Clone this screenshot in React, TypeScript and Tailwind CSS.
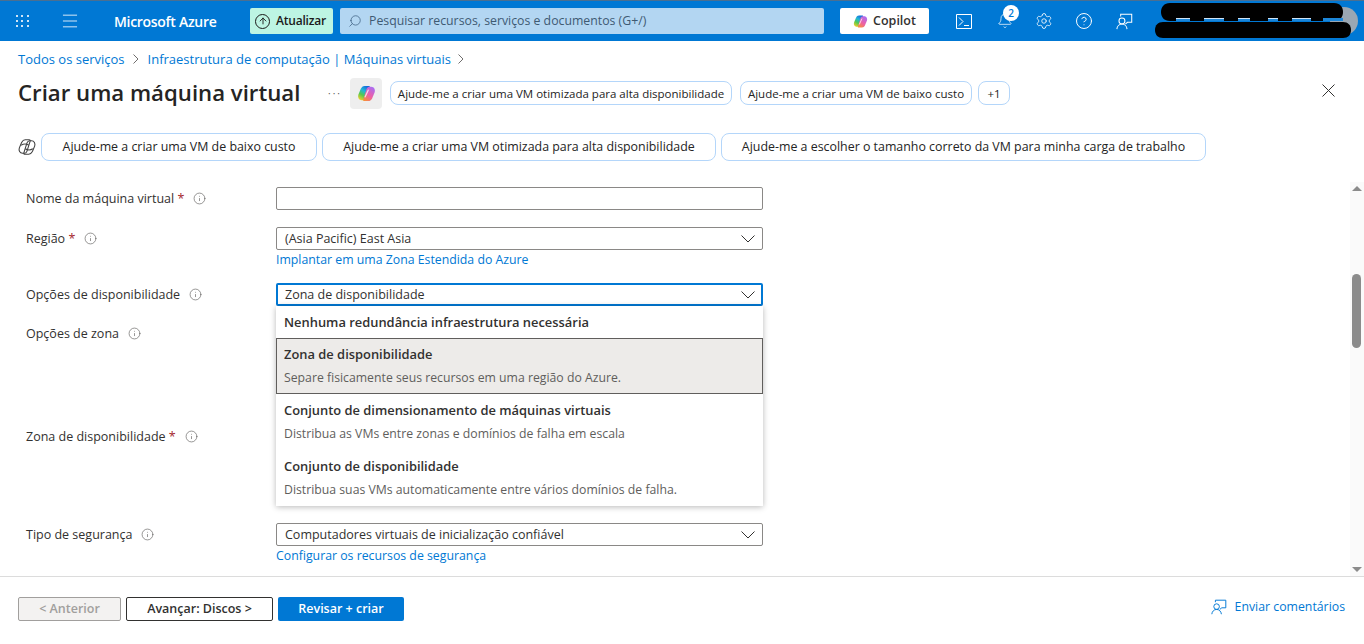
import { useId } from "react";
import { Menu, Search, Bell, Settings, CircleHelp, ArrowUp, Info } from "lucide-react";

const font = { fontFamily: '"Open Sans", "Noto Sans", sans-serif' };

const leftLobe = "M12.5 2H8C6 2 5 3.200 4 5L1.500 11C.5 14 2 17 5 17H7C8.500 17 9.500 16 10 14.500L13.500 3.500C13.700 2.600 13.300 2 12.500 2Z";
const rightLobe = "M7.500 18H12C14 18 15 16.800 16 15L18.500 9C19.500 6 18 3 15 3H13C11.500 3 10.500 4 10 5.500L6.500 16.500C6.300 17.400 6.700 18 7.500 18Z";

const CopilotLogo = ({ size = 20 }: { size?: number }) => {
  const id = useId();
  return (
    <svg width={size} height={size} viewBox="0 0 20 20">
      <defs>
        <linearGradient id={id + "a"} x1="0.7" y1="0" x2="0.2" y2="1">
          <stop offset="0" stopColor="#1668dc" />
          <stop offset="0.35" stopColor="#20b6d8" />
          <stop offset="0.65" stopColor="#55c94f" />
          <stop offset="1" stopColor="#f4cf2a" />
        </linearGradient>
        <linearGradient id={id + "b"} x1="0.8" y1="0" x2="0.2" y2="1">
          <stop offset="0" stopColor="#a86ef5" />
          <stop offset="0.55" stopColor="#ec5fa8" />
          <stop offset="1" stopColor="#f78f3c" />
        </linearGradient>
      </defs>
      <path d={leftLobe} fill={`url(#${id}a)`} />
      <path d={rightLobe} fill={`url(#${id}b)`} />
      <path d="M11.800 6.500 8.600 13.500" stroke="white" strokeOpacity="0.75" strokeWidth="1.300" strokeLinecap="round" />
    </svg>
  );
};

const CopilotMono = () => (
  <svg width="18" height="18" viewBox="0 0 20 20" fill="none" stroke="#424242" strokeWidth="1.200">
    <path d={leftLobe} />
    <path d={rightLobe} />
    <path d="M3.500 8c2.500-1.500 6-1.500 8.500 0M8 12c2.500 1.500 6 1.500 8.500 0" />
  </svg>
);

const FeedbackIcon = ({ color, size = 20 }: { color: string; size?: number }) => (
  <svg width={size} height={size} viewBox="0 0 20 20" fill="none" stroke={color} strokeWidth="1.200">
    <circle cx="7" cy="9.500" r="3.500" />
    <path d="M1 19c.3-3.400 2.800-6 6-6s5.700 2.600 6 6" />
    <path d="M5.500 4V1.500h13v9.500h-5l-2.500 2" />
  </svg>
);

const Chevron = () => (
  <svg width="14" height="8" viewBox="0 0 14 8" fill="none" stroke="#323130" strokeWidth="1">
    <path d="M.5.5 7 7 13.500.5" />
  </svg>
);

const Crumb = () => (
  <svg width="6" height="10" viewBox="0 0 6 10" fill="none" stroke="#605e5c" strokeWidth="0.900">
    <path d="M.5.5 5 5 .5 9.500" />
  </svg>
);

const Req = () => <span className="text-[#a4262c]">*</span>;

const Label = ({ text, req }: { text: string; req?: boolean }) => (
  <div className="flex items-center gap-[9px] text-[12.5px] leading-[23px] text-[#323130]">
    <span>
      {text} {req && <Req />}
    </span>
    <Info size={13} strokeWidth={1.2} className="text-[#605e5c]" />
  </div>
);

const SelectBox = ({ value, focus }: { value: string; focus?: boolean }) => (
  <div
    className={`flex h-[23px] w-[487px] items-center justify-between rounded-[2px] text-[12.5px] text-[#323130] ${
      focus ? "border-2 border-[#0078d4] pl-[7px] pr-[6px]" : "border border-[#8a8886] pl-2 pr-[7px]"
    }`}
  >
    <span className="pt-px">{value}</span>
    <Chevron />
  </div>
);

const Option = ({ title, desc, active }: { title: string; desc?: string; active?: boolean }) => (
  <div
    className={`flex flex-col justify-center ${desc ? "h-[56px] gap-[8px]" : "h-[32px]"} ${
      active ? "border border-[#605e5c] bg-[#edebe9] px-[7px]" : "px-2"
    }`}
  >
    <div className="text-[12.9px] font-semibold leading-4 text-[#323130]">{title}</div>
    {desc && <div className="text-[12.25px] leading-4 text-[#605e5c]">{desc}</div>}
  </div>
);

const Chip = ({ text, w }: { text: string; w: string }) => (
  <div className={`flex h-[24px] items-center justify-center whitespace-nowrap rounded-[8px] border border-[#b4d6fa] pt-px text-[11.5px] text-[#242424] ${w}`}>
    {text}
  </div>
);

const BigChip = ({ text, w }: { text: string; w: string }) => (
  <div className={`flex h-[28px] items-center justify-center whitespace-nowrap rounded-[8px] border border-[#b4d6fa] pt-px text-[12.4px] text-[#242424] ${w}`}>
    {text}
  </div>
);

const Link = ({ text }: { text: string }) => (
  <div className="text-[12.3px] leading-[19px] text-[#0078d4]">{text}</div>
);

export default function App() {
  return (
    <div style={font} className="relative flex h-[644px] w-[1364px] flex-col overflow-hidden bg-white">
      {/* top bar */}
      <header className="relative flex h-[41px] shrink-0 items-center border-t border-[#4a6f91] bg-[#0078d4] text-white">
        <div className="ml-[16px] grid w-[13px] grid-cols-3 gap-[3px]">
          {Array.from({ length: 9 }).map((_, i) => (
            <span key={i} className="h-[2px] w-[2px] bg-[#cfe4f7]" />
          ))}
        </div>
        <Menu size={20} strokeWidth={1.2} className="ml-[31px] text-[#d5e8f8]" />
        <div className="ml-[34px] w-[136px] text-[14px] font-semibold tracking-[-0.3px] whitespace-nowrap">Microsoft Azure</div>
        <div className="flex h-[26px] w-[83px] items-center rounded-[2px] bg-[#bdf5e3] pl-[5px] text-[12px] font-semibold tracking-[-0.2px] text-[#1b1a19]">
          <span className="flex h-[15px] w-[15px] items-center justify-center rounded-full border border-[#1b1a19]">
            <ArrowUp size={10} strokeWidth={2.2} />
          </span>
          <span className="ml-[6px]">Atualizar</span>
        </div>
        <div className="ml-[7px] flex h-[26px] w-[484px] items-center rounded-[2px] bg-[#b3d6f2] pl-[8px] text-[12.3px] text-[#3f5a72]">
          <Search size={14} strokeWidth={1.2} className="-scale-x-100 text-[#35587a]" />
          <span className="ml-[7px]">Pesquisar recursos, serviços e documentos (G+/)</span>
        </div>
        <div className="ml-[16px] flex h-[26px] w-[89px] items-center justify-center gap-[5px] rounded-[2px] bg-white text-[12.5px] font-semibold text-[#323130]">
          <CopilotLogo size={15} />
          Copilot
        </div>
        <svg className="ml-[27px]" width="16" height="15" viewBox="0 0 16 15" fill="none" stroke="white" strokeWidth="1">
          <path d="M.5.5h15v14H.5z" />
          <path d="M3 3.500 7 7.500 3 11.500M8 11.500h5" />
        </svg>
        <div className="relative ml-[25px] flex">
          <Bell size={16} strokeWidth={1.1} />
          <span className="absolute -top-[8px] left-[6px] flex h-[16px] w-[16px] items-center justify-center rounded-full bg-white text-[10px] font-semibold text-[#0078d4]">
            2
          </span>
        </div>
        <Settings size={18} strokeWidth={1.1} className="ml-[22px]" />
        <CircleHelp size={18} strokeWidth={1.3} className="ml-[22px]" />
        <span className="ml-[23px] flex"><FeedbackIcon color="white" size={17} /></span>
        <div className="absolute right-[6px] top-[6px] h-[28px] w-[28px] rounded-full bg-[#9aa7b3]" />
        <svg className="absolute left-[1155px] top-[2px]" width="197" height="36" viewBox="0 0 197 36">
          <path d="M15 0h164c6 0 9 4 9 9s-3 9-9 9H15C9 18 6 14 6 9s3-9 9-9Z" fill="black" />
          <path d="M21 16.500h14M49 16.500h20M83 16.500h12M113 16.500h10M137 16.500h19M168 16.500h20" stroke="#1c86d8" strokeWidth="3" />
          <path d="M21 15.500h14M49 15.500h20M83 15.500h12M113 15.500h10M137 15.500h19" stroke="#cfe4f7" strokeWidth="1" />
          <path d="M8 19h180c5 0 8 3 8 8s-3 8-8 8H8c-5 0-8-3-8-8s3-8 8-8Z" fill="black" />
        </svg>
      </header>

      {/* page head */}
      <div className="shrink-0 px-[18px]">
        <nav className="mt-[9px] flex h-[18px] items-center text-[13px] leading-[18px] text-[#0078d4]">
          <span>Todos os serviços</span>
          <span className="ml-[8px] mr-[9px] flex"><Crumb /></span>
          <span>Infraestrutura de computação | Máquinas virtuais</span>
          <span className="ml-[7px] flex"><Crumb /></span>
        </nav>
        <div className="relative mt-[9px] flex h-[32px] items-center">
          <h1 className="w-[310px] text-[22.2px] font-semibold leading-8 whitespace-nowrap text-[#252423]">Criar uma máquina virtual</h1>
          <span className="mr-[8px] w-[14px] text-center text-[10px] leading-none tracking-[2px] text-[#605e5c]">···</span>
          <div className="flex h-[31px] w-[32px] items-center justify-center rounded-[4px] bg-[#eeeeee]">
            <CopilotLogo size={19} />
          </div>
          <div className="ml-[8px] flex gap-[8px]">
            <Chip text="Ajude-me a criar uma VM otimizada para alta disponibilidade" w="w-[342px]" />
            <Chip text="Ajude-me a criar uma VM de baixo custo" w="w-[232px]" />
          </div>
          <div className="ml-[6px]"><Chip text="+1" w="w-[32px]" /></div>
          <svg className="absolute left-[1304px] top-[7px]" width="13" height="13" viewBox="0 0 13 13" fill="none" stroke="#323130" strokeWidth="1">
            <path d="M.5.5l12 12M12.500.5l-12 12" />
          </svg>
        </div>
        <div className="mt-[24px] flex items-center">
          <span className="mr-[5px] flex w-[18px]"><CopilotMono /></span>
          <div className="flex gap-[5px]">
            <BigChip text="Ajude-me a criar uma VM de baixo custo" w="w-[276px]" />
            <BigChip text="Ajude-me a criar uma VM otimizada para alta disponibilidade" w="w-[394px]" />
            <BigChip text="Ajude-me a escolher o tamanho correto da VM para minha carga de trabalho" w="w-[485px]" />
          </div>
        </div>
      </div>

      {/* form */}
      <div className="relative mt-[21px] flex min-h-0 flex-1 overflow-hidden border-b border-[#dcdcdc]">
        <div className="flex-1 pl-[26px] pt-[5px]">
          <div className="grid grid-cols-[250px_487px] items-start">
            <Label text="Nome da máquina virtual" req />
            <div className="flex h-[23px] w-[487px] rounded-[2px] border border-[#8a8886]" />

            <div className="mt-[17px]"><Label text="Região" req /></div>
            <div className="mt-[17px]">
              <SelectBox value="(Asia Pacific) East Asia" />
              <Link text="Implantar em uma Zona Estendida do Azure" />
            </div>

            <div className="mt-[14px]"><Label text="Opções de disponibilidade" /></div>
            <div className="relative z-10 mt-[14px]">
              <SelectBox value="Zona de disponibilidade" focus />
              <div className="absolute left-0 top-[23px] w-[487px] bg-white shadow-[0_1px_6px_rgba(0,0,0,0.28)]">
                <Option title="Nenhuma redundância infraestrutura necessária" />
                <Option title="Zona de disponibilidade" desc="Separe fisicamente seus recursos em uma região do Azure." active />
                <Option title="Conjunto de dimensionamento de máquinas virtuais" desc="Distribua as VMs entre zonas e domínios de falha em escala" />
                <Option title="Conjunto de disponibilidade" desc="Distribua suas VMs automaticamente entre vários domínios de falha." />
              </div>
            </div>

            <div className="mt-[16px] h-[95px]"><Label text="Opções de zona" /></div>
            <div className="mt-[16px] h-[95px]" />

            <div className="mt-[8px] h-[98px]"><Label text="Zona de disponibilidade" req /></div>
            <div className="mt-[8px] h-[98px]" />

            <Label text="Tipo de segurança" />
            <div>
              <SelectBox value="Computadores virtuais de inicialização confiável" />
              <Link text="Configurar os recursos de segurança" />
            </div>
          </div>
        </div>

        {/* scrollbar */}
        <div className="flex w-[14px] flex-col items-center justify-between bg-[#fafafa] py-[4px]">
          <span className="h-0 w-0 border-x-[5px] border-b-[5px] border-x-transparent border-b-[#8b8b8b]" />
          <span className="h-0 w-0 border-x-[5px] border-t-[5px] border-x-transparent border-t-[#8b8b8b]" />
        </div>
        <div className="absolute right-[3px] top-[92px] h-[74px] w-[9px] rounded-full bg-[#8b8b8b]" />
      </div>

      {/* footer */}
      <footer className="flex h-[67px] shrink-0 items-start justify-between pl-[18px] pr-[19px] pt-[20px]">
        <div className="flex gap-[5px] text-[12.5px]">
          <div className="flex h-[24px] w-[103px] items-center justify-center rounded-[2px] border border-[#a19f9d] bg-[#f3f2f1] font-semibold text-[#a19f9d]">
            &lt; Anterior
          </div>
          <div className="flex h-[24px] w-[147px] items-center justify-center rounded-[2px] border border-[#323130] font-semibold text-[#323130]">
            Avançar: Discos &gt;
          </div>
          <div className="flex h-[24px] w-[126px] items-center justify-center rounded-[2px] bg-[#0078d4] font-semibold text-white">
            Revisar + criar
          </div>
        </div>
        <div className="mt-px flex items-center gap-[8px] text-[12.3px] text-[#0078d4]">
          <FeedbackIcon color="#0078d4" size={16} />
          Enviar comentários
        </div>
      </footer>
    </div>
  );
}
